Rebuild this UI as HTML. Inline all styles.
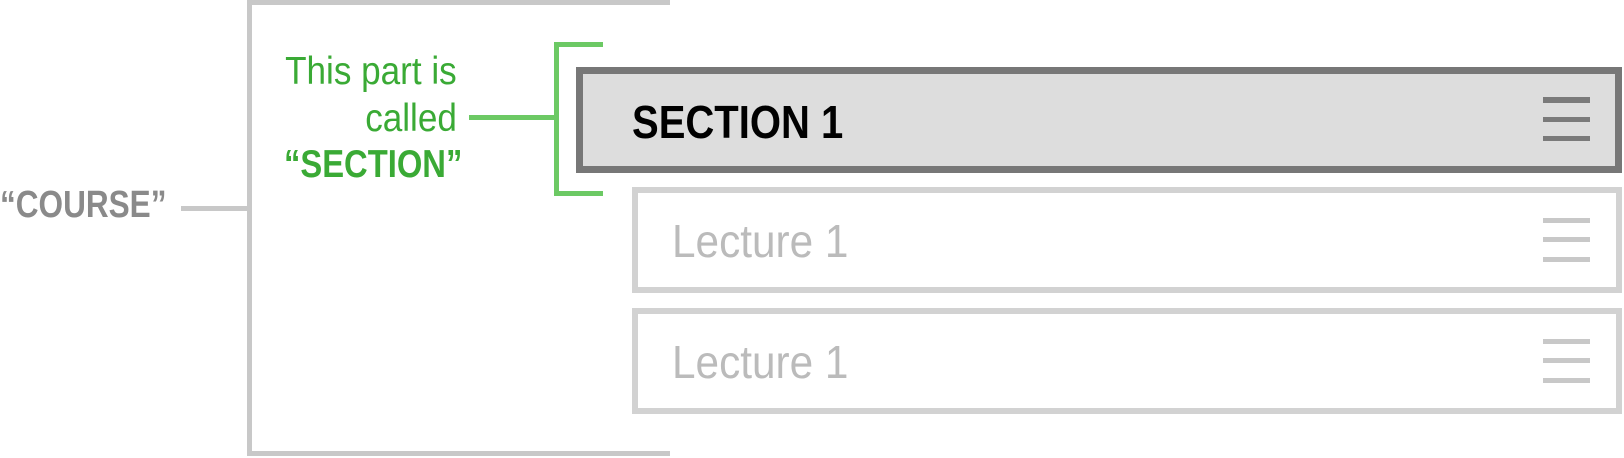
<!DOCTYPE html>
<html><head><meta charset="utf-8"><style>
html,body{margin:0;padding:0;background:#fff;width:1624px;height:458px;overflow:hidden;position:relative;font-family:"Liberation Sans",sans-serif}
.a{position:absolute}
.t{position:absolute;line-height:1;white-space:nowrap}
</style></head><body>
<div class="a" style="left:247px;top:0;width:423px;height:5px;background:#c8c8c8"></div>
<div class="a" style="left:247px;top:0;width:5px;height:456px;background:#c8c8c8"></div>
<div class="a" style="left:247px;top:451px;width:423px;height:5px;background:#c8c8c8"></div>
<div class="a" style="left:181px;top:206px;width:66px;height:5px;background:#c8c8c8"></div>
<div class="t" style="left:0;top:186px;font-size:38px;font-weight:bold;color:#8a8a8a;transform:scaleX(0.83);transform-origin:left">“COURSE”</div>

<div class="t" style="right:1167px;top:52px;font-size:39px;color:#3aaa35;transform:scaleX(0.9);transform-origin:right">This part is</div>
<div class="t" style="right:1167px;top:99px;font-size:39px;color:#3aaa35;transform:scaleX(0.9);transform-origin:right">called</div>
<div class="t" style="right:1162px;top:145px;font-size:39px;font-weight:bold;color:#3aaa35;transform:scaleX(0.84);transform-origin:right">“SECTION”</div>
<div class="a" style="left:469px;top:115px;width:88px;height:5px;background:#6cc964"></div>
<div class="a" style="left:554px;top:42px;width:5px;height:154px;background:#6cc964"></div>
<div class="a" style="left:554px;top:42px;width:49px;height:5px;background:#6cc964"></div>
<div class="a" style="left:554px;top:191px;width:49px;height:5px;background:#6cc964"></div>

<div class="a" style="left:576px;top:67px;width:1046px;height:106px;box-sizing:border-box;border:7px solid #777;background:#ddd"></div>
<div class="t" style="left:632px;top:99px;font-size:46px;font-weight:bold;color:#000;transform:scaleX(0.87);transform-origin:left">SECTION 1</div>
<div class="a" style="left:1543px;top:97px;width:47px;height:6px;background:#7a7a7a"></div>
<div class="a" style="left:1543px;top:117px;width:47px;height:5px;background:#7a7a7a"></div>
<div class="a" style="left:1543px;top:136px;width:47px;height:5px;background:#7a7a7a"></div>

<div class="a" style="left:632px;top:187px;width:990px;height:106px;box-sizing:border-box;border:6px solid #d2d2d2;background:#fff"></div>
<div class="t" style="left:672px;top:218px;font-size:46px;color:#bbb;transform:scaleX(0.92);transform-origin:left">Lecture 1</div>
<div class="a" style="left:1543px;top:218px;width:47px;height:5px;background:#c8c8c8"></div>
<div class="a" style="left:1543px;top:237px;width:47px;height:5px;background:#c8c8c8"></div>
<div class="a" style="left:1543px;top:257px;width:47px;height:5px;background:#c8c8c8"></div>

<div class="a" style="left:632px;top:308px;width:990px;height:106px;box-sizing:border-box;border:6px solid #d2d2d2;background:#fff"></div>
<div class="t" style="left:672px;top:339px;font-size:46px;color:#bbb;transform:scaleX(0.92);transform-origin:left">Lecture 1</div>
<div class="a" style="left:1543px;top:339px;width:47px;height:5px;background:#c8c8c8"></div>
<div class="a" style="left:1543px;top:358px;width:47px;height:5px;background:#c8c8c8"></div>
<div class="a" style="left:1543px;top:378px;width:47px;height:5px;background:#c8c8c8"></div>
</body></html>
